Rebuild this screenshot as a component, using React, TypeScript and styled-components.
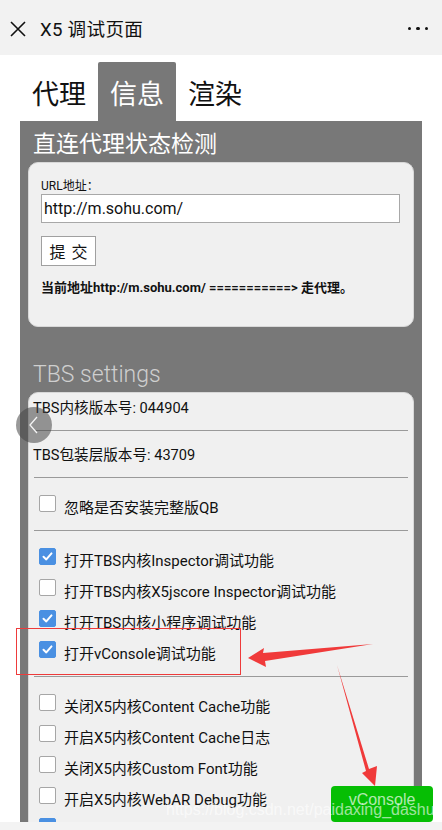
import React from "react";
import styled, { createGlobalStyle } from "styled-components";

const GlobalStyle = createGlobalStyle`
  html, body { margin: 0; padding: 0; background: #ffffff; }
  body { font-family: Roboto, "Noto Sans CJK SC", sans-serif; color: #111; overflow: hidden; }
  * { box-sizing: border-box; }
`;

const Root = styled.div`
  position: relative;
  width: 442px;
  height: 830px;
  overflow: hidden;
  background: #fff;
`;

const TopBar = styled.div`
  height: 55px;
  background: #f2f2f2;
  display: flex;
  align-items: center;
  padding: 0 14px 0 9px;
`;

const CloseBtn = styled.div`
  width: 17px;
  height: 17px;
  display: flex;
  align-items: center;
  justify-content: center;
  margin-right: 14px;
  margin-top: 2px;
`;

const Title = styled.div`
  font-size: 18.6px;
  color: #111;
  flex: 1;
  letter-spacing: 0.3px;
`;

const Dots = styled.div`
  display: flex;
  gap: 5px;
  margin-top: 2px;
`;

const Dot = styled.span`
  width: 3.5px;
  height: 3.5px;
  border-radius: 50%;
  background: #111;
`;

const Content = styled.div`
  padding: 7px 20px 0 20px;
`;

const Tabs = styled.div`
  display: flex;
  height: 59px;
`;

const Tab = styled.div<{ $active?: boolean }>`
  width: 78px;
  display: flex;
  align-items: center;
  justify-content: center;
  font-size: 27px;
  color: ${(p) => (p.$active ? "#ffffff" : "#111111")};
  background: ${(p) => (p.$active ? "#787878" : "transparent")};
  border-radius: 2px 2px 0 0;
  padding-top: 2px;
`;

const Panel = styled.div`
  background: #787878;
  padding: 9px 8px 40px 8px;
  min-height: 760px;
`;

const PanelHeading = styled.div<{ $light?: boolean }>`
  font-size: 23px;
  font-weight: ${(p) => (p.$light ? 300 : 400)};
  color: ${(p) => (p.$light ? "#cfcfcf" : "#ffffff")};
  line-height: 30px;
  padding-left: 5px;
  margin: ${(p) => (p.$light ? "33px 0 2px" : "0 0 2px")};
`;

const Card = styled.div<{ $form?: boolean }>`
  background: #f0f0f0;
  border-radius: 10px;
  border: 1px solid #d8d8d8;
  padding: ${(p) => (p.$form ? "15px 13px 30px 12px" : "3px 4px 0 4px")};
`;

const Label = styled.div`
  font-size: 12px;
  line-height: 16px;
  color: #111;
`;

const UrlInput = styled.div`
  height: 29px;
  width: 359px;
  background: #fff;
  border: 1px solid #a8a8a8;
  font-size: 16px;
  line-height: 27px;
  padding-left: 2px;
  color: #111;
`;

const SubmitBtn = styled.div`
  margin-top: 13px;
  width: 55px;
  height: 30px;
  background: #fff;
  border: 1px solid #a0a0a0;
  font-size: 16px;
  display: flex;
  align-items: center;
  justify-content: center;
  letter-spacing: 6px;
  padding-left: 6px;
`;

const ResultText = styled.div`
  margin-top: 14px;
  font-size: 13px;
  font-weight: 700;
  line-height: 16px;
  color: #111;
`;

const InfoRow = styled.div<{ $first?: boolean }>`
  font-size: 14.6px;
  line-height: 24px;
  padding: ${(p) => (p.$first ? "0" : "12px")} 0 10px 0;
  color: #111;
`;

const Divider = styled.div`
  height: 1px;
  background: #9a9a9a;
  margin: 0 1px;
`;

const Group = styled.div`
  padding: 13px 0 8px 6px;
`;

const CheckRow = styled.div`
  display: flex;
  align-items: center;
  height: 31px;
  font-size: 15px;
  color: #111;
`;

const Box = styled.span<{ $checked?: boolean }>`
  width: 17px;
  height: 17px;
  border-radius: 2px;
  margin-right: 8px;
  margin-bottom: 6px;
  flex-shrink: 0;
  display: flex;
  align-items: center;
  justify-content: center;
  background: ${(p) => (p.$checked ? "#4a90e2" : "#ffffff")};
  border: 1px solid ${(p) => (p.$checked ? "#4a90e2" : "#a6a6a6")};
`;

const BackCircle = styled.div`
  position: absolute;
  left: 16px;
  top: 407px;
  width: 36px;
  height: 36px;
  border-radius: 50%;
  background: rgba(70, 70, 70, 0.55);
  display: flex;
  align-items: center;
  justify-content: center;
`;

const RedBox = styled.div`
  position: absolute;
  left: 16px;
  top: 628px;
  width: 225px;
  height: 47px;
  border: 1.5px solid #ee3b3b;
`;

const ArrowLayer = styled.svg`
  position: absolute;
  left: 0;
  top: 0;
  pointer-events: none;
`;

const VConsoleBtn = styled.div`
  position: absolute;
  left: 331px;
  top: 786px;
  width: 102px;
  height: 36px;
  border-radius: 4px;
  background: #06be04;
  color: rgba(255, 255, 255, 0.7);
  font-size: 16px;
  font-family: "Liberation Sans", Arial, sans-serif;
  display: flex;
  justify-content: center;
  padding-top: 5px;
`;

const Watermark = styled.div`
  position: absolute;
  left: 166px;
  top: 801px;
  font-family: "Liberation Sans", Arial, sans-serif;
  font-size: 16px;
  color: rgba(255, 255, 255, 0.62);
  white-space: nowrap;
`;

const BottomBar = styled.div`
  position: absolute;
  left: 0;
  right: 0;
  bottom: 0;
  height: 8px;
  background: #f3f3f3;
`;

const Check = () => (
  <svg width="13" height="13" viewBox="0 0 13 13">
    <path d="M2.5 6.8 L5.3 9.4 L10.5 3.4" fill="none" stroke="#fff" strokeWidth="2" strokeLinecap="round" strokeLinejoin="round" />
  </svg>
);

const CheckItem = ({ label, checked }: { label?: string; checked?: boolean }) => (
  <CheckRow>
    <Box $checked={checked}>{checked && <Check />}</Box>
    {label && <span>{label}</span>}
  </CheckRow>
);

export default function App() {
  return (
    <Root>
      <GlobalStyle />
      <TopBar>
        <CloseBtn>
          <svg width="16" height="16" viewBox="0 0 16 16">
            <path d="M1 1 L15 15 M15 1 L1 15" stroke="#111" strokeWidth="1.6" />
          </svg>
        </CloseBtn>
        <Title>X5 调试页面</Title>
        <Dots>
          <Dot />
          <Dot />
          <Dot />
        </Dots>
      </TopBar>
      <Content>
        <Tabs>
          <Tab>代理</Tab>
          <Tab $active>信息</Tab>
          <Tab>渲染</Tab>
        </Tabs>
        <Panel>
          <PanelHeading>直连代理状态检测</PanelHeading>
          <Card $form>
            <Label>URL地址：</Label>
            <UrlInput>http://m.sohu.com/</UrlInput>
            <SubmitBtn>提交</SubmitBtn>
            <ResultText>当前地址http://m.sohu.com/ ===========&gt; 走代理。</ResultText>
          </Card>
          <PanelHeading $light>TBS settings</PanelHeading>
          <Card>
            <InfoRow $first>TBS内核版本号: 044904</InfoRow>
            <Divider />
            <InfoRow>TBS包装层版本号: 43709</InfoRow>
            <Divider />
            <Group>
              <CheckItem label="忽略是否安装完整版QB" />
            </Group>
            <Divider />
            <Group>
              <CheckItem label="打开TBS内核Inspector调试功能" checked />
              <CheckItem label="打开TBS内核X5jscore Inspector调试功能" />
              <CheckItem label="打开TBS内核小程序调试功能" checked />
              <CheckItem label="打开vConsole调试功能" checked />
            </Group>
            <Divider />
            <Group>
              <CheckItem label="关闭X5内核Content Cache功能" />
              <CheckItem label="开启X5内核Content Cache日志" />
              <CheckItem label="关闭X5内核Custom Font功能" />
              <CheckItem label="开启X5内核WebAR Debug功能" />
              <CheckItem checked />
            </Group>
          </Card>
        </Panel>
      </Content>

      <BackCircle>
        <svg width="12" height="20" viewBox="0 0 12 20">
          <path d="M9 2 L2 10 L9 18" fill="none" stroke="#f4f4f4" strokeWidth="1.3" />
        </svg>
      </BackCircle>
      <RedBox />
      <ArrowLayer width="442" height="830" viewBox="0 0 442 830">
        <polygon points="248,658 264,648 263,653 373,644 265,661 266,667" fill="#f03a3a" />
        <polygon points="337,665 369,769 377,766 375,786 362,773 366,771" fill="#f03a3a" />
      </ArrowLayer>
      <VConsoleBtn>vConsole</VConsoleBtn>
      <Watermark>https://blog.csdn.net/paidaxing_dashu</Watermark>
      <BottomBar />
    </Root>
  );
}
